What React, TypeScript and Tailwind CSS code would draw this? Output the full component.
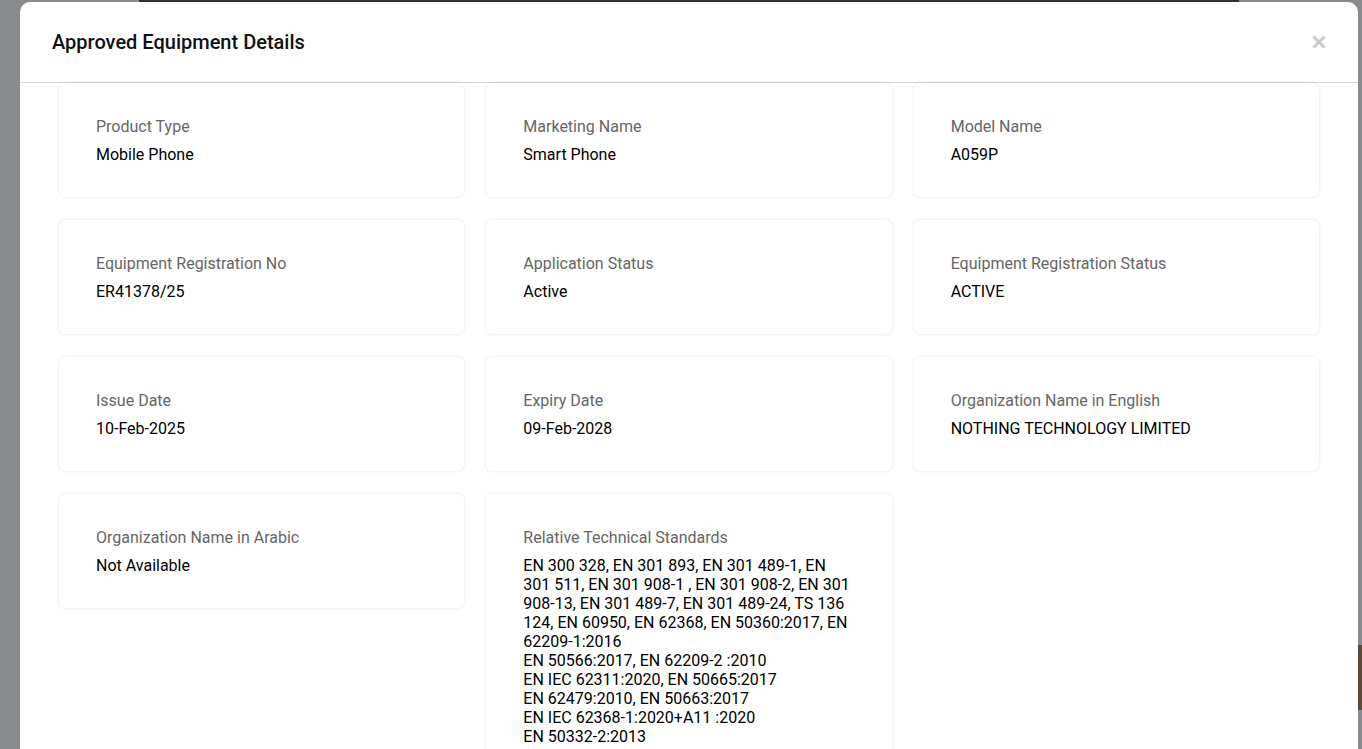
import React from "react";

const items: { label: string; value: React.ReactNode }[] = [
  { label: "Product Type", value: "Mobile Phone" },
  { label: "Marketing Name", value: "Smart Phone" },
  { label: "Model Name", value: "A059P" },
  { label: "Equipment Registration No", value: "ER41378/25" },
  { label: "Application Status", value: "Active" },
  { label: "Equipment Registration Status", value: "ACTIVE" },
  { label: "Issue Date", value: "10-Feb-2025" },
  { label: "Expiry Date", value: "09-Feb-2028" },
  { label: "Organization Name in English", value: "NOTHING TECHNOLOGY LIMITED" },
  { label: "Organization Name in Arabic", value: "Not Available" },
  {
    label: "Relative Technical Standards",
    value: (
      <>
        <div>
          EN 300 328, EN 301 893, EN 301 489-1, EN 301 511, EN 301 908-1 , EN 301 908-2, EN 301 908-13, EN 301
          489-7, EN 301 489-24, TS 136 124, EN 60950, EN 62368, EN 50360:2017, EN 62209-1:2016
        </div>
        <div>EN 50566:2017, EN 62209-2 :2010</div>
        <div>EN IEC 62311:2020, EN 50665:2017</div>
        <div>EN 62479:2010, EN 50663:2017</div>
        <div>EN IEC 62368-1:2020+A11 :2020</div>
        <div>EN 50332-2:2013</div>
      </>
    ),
  },
];

export default function App() {
  return (
    <div
      className="relative h-[749px] w-full overflow-hidden bg-[#898a8e]"
      style={{ fontFamily: "Roboto, 'Liberation Sans', sans-serif" }}
    >
      <div className="absolute left-[139px] top-0 h-[2px] w-[1100px] bg-[#2b3136]" />
      <div className="absolute right-0 top-[645px] h-[65px] w-[4px] bg-[#5a4a3c]" />
      <div className="absolute left-[20px] top-[2px] flex h-[800px] w-[1338px] flex-col rounded-t-[10px] bg-white">
        <div className="flex h-[81px] shrink-0 items-center justify-between border-b border-[#d4d4d4] pl-[32px] pr-[32px]">
          <h2 className="text-[20px] font-medium text-[#111]">Approved Equipment Details</h2>
          <svg width="14" height="14" viewBox="0 0 14 14" className="mb-[1px]">
            <path d="M1.5 1.5 L12.5 12.5 M12.5 1.5 L1.5 12.5" stroke="#c9c9c9" strokeWidth="3" strokeLinecap="butt" />
          </svg>
        </div>
        <div className="grid grid-cols-3 items-start gap-x-[22px] gap-y-[23px] px-[39px]">
          {items.map((it) => (
            <div
              key={it.label}
              className="rounded-[6px] bg-white px-[37px] pb-[33px] pt-[34px] shadow-[0_0_3px_rgba(0,0,0,0.12)]"
            >
              <div className="text-[16px] leading-[19px] text-[#666]">{it.label}</div>
              <div className="mt-[9px] text-[16px] leading-[19px] text-black">{it.value}</div>
            </div>
          ))}
        </div>
      </div>
    </div>
  );
}
